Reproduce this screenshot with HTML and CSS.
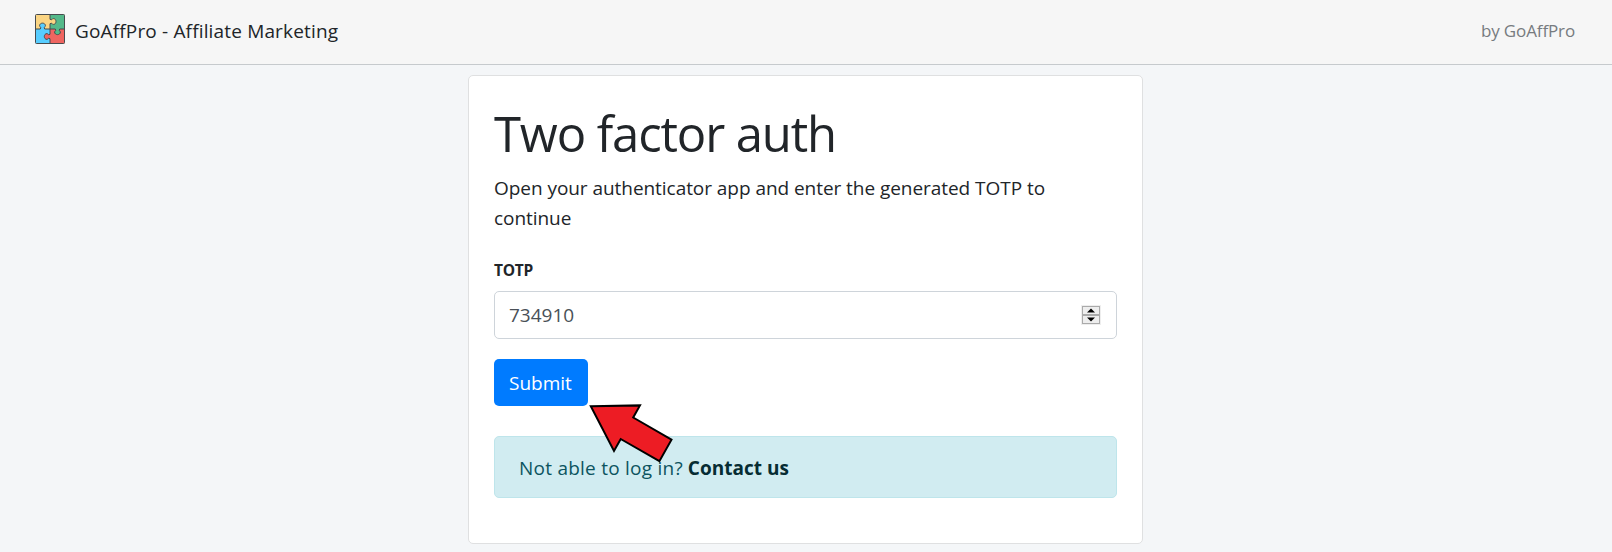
FILE: index.html
```html
<!DOCTYPE html>
<html lang="en">
<head>
<meta charset="utf-8">
<title>GoAffPro - Affiliate Marketing</title>
<link rel="stylesheet" href="styles.css">
</head>
<body>
<header class="navbar">
  <a class="brand">
    <svg class="logo" viewBox="0 0 30 30" width="30" height="30">
      <rect x=".5" y=".5" width="29" height="29" rx="1" fill="#fbd583"/>
      <path d="M15 .5H29.5V15H15z" fill="#54b98a"/>
      <path d="M.5 15H15V29.500H.5z" fill="#57cdff"/>
      <path d="M15 15H29.500V29.500H15z" fill="#ef6560"/>
      <g stroke="#474b4e" stroke-width="1">
        <path d="M15 .5V5.300C17.500 6.600 16.500 4.600 18.500 4.600C21.800 4.600 21.800 10.400 18.500 10.400C16.500 10.400 17.500 8.400 15 9.700V15" fill="#fbd583"/>
        <path d="M.5 15H5.300C6.600 12.500 4.600 13.500 4.600 11.700C4.600 8.300 10.400 8.300 10.400 11.700C10.400 13.500 8.400 12.500 9.700 15H15" fill="#57cdff"/>
        <path d="M15 15H20.300C21.600 17.500 19.600 16.500 19.600 18C19.600 21.500 25.400 21.500 25.400 18C25.400 16.500 23.400 17.500 24.700 15H29.500" fill="#54b98a"/>
        <path d="M15 15V20.300C12.500 21.600 13.500 19.600 12 19.600C8.400 19.600 8.400 25.400 12 25.400C13.500 25.400 12.500 23.400 15 24.700V29.500" fill="#ef6560"/>
        <rect x=".5" y=".5" width="29" height="29" rx="1" fill="none"/>
      </g>
    </svg>
    <span class="brand-name">GoAffPro - Affiliate Marketing</span>
  </a>
  <span class="byline">by GoAffPro</span>
</header>
<main class="card">
  <h1 class="title">Two factor auth</h1>
  <p class="lead">Open your authenticator app and enter the generated TOTP to <br>continue</p>
  <form class="form">
    <label class="label">TOTP</label>
    <div class="field">
      <span class="value">734910</span>
      <span class="spinner">
        <svg class="step" viewBox="0 0 16 7"><path d="M4 5.500L8 1.500L12 5.500z"/></svg>
        <svg class="step" viewBox="0 0 16 7"><path d="M4 1.500L8 5.500L12 1.500z"/></svg>
      </span>
    </div>
    <button class="submit" type="button"><span class="submit-text">Submit</span></button>
  </form>
  <div class="alert"><span class="question">Not able to log in?</span><a class="contact">Contact us</a></div>
</main>
<svg class="pointer" viewBox="0 0 90 64" width="90" height="64">
  <path d="M4.800 6.200L54 5.400L47.200 17.500L85.500 39.700L73.400 61.200L34.700 39L28 51z"/>
</svg>
</body>
</html>
```
FILE: styles.css
```css
* { box-sizing: border-box; }

body {
  margin: 0;
  height: 552px;
  overflow: hidden;
  background: #f4f6f8;
  color: #212529;
  font: 19px/30px "Open Sans", "Noto Sans", sans-serif;
  white-space: nowrap;
}

.navbar {
  height: 65px;
  padding: 0 37px 7px 35px;
  display: flex;
  align-items: center;
  justify-content: space-between;
  background: #f6f6f6;
  border-bottom: 1px solid #c6cacd;
}

.brand { display: flex; align-items: center; gap: 10px; }
.logo { display: block; }
.brand-name { padding-top: 4px; letter-spacing: 0.16px; }
.byline { padding-top: 4px; font-size: 17px; color: #777b7f; letter-spacing: -0.13px; }

.card {
  width: 675px;
  height: 469px;
  margin: 10px 0 0 468px;
  padding: 25px;
  background: #fff;
  border: 1px solid #dfe0e1;
  border-radius: 5px;
}

.title { margin: 2px 0 10px; font-size: 49px; font-weight: 400; line-height: 60px; letter-spacing: -1.120px; }
.lead { margin: 0 0 22px; letter-spacing: -0.050px; }
.label { display: block; height: 36px; font-size: 15.500px; font-weight: 700; letter-spacing: -0.3px; }

.field {
  height: 48px;
  padding: 0 16px 0 14px;
  display: flex;
  align-items: center;
  justify-content: space-between;
  border: 1px solid #ced4da;
  border-radius: 5px;
  color: #495057;
}

.spinner { display: flex; flex-direction: column; width: 18px; background: #aaa; padding: 1px; gap: 2px; outline: 1px solid #eee; }
.step { display: block; width: 16px; height: 7px; background: #eee; }

.submit {
  display: block;
  width: 94px;
  height: 47px;
  margin-top: 20px;
  padding: 0 0 0 15px;
  border: 0;
  border-radius: 5px;
  background: #007bff;
  color: #fff;
  font: inherit;
  text-align: left;
}

.alert {
  height: 62px;
  margin-top: 30px;
  padding: 1px 24px 0;
  display: flex;
  align-items: center;
  gap: 5px;
  border: 1px solid #bee5eb;
  border-radius: 5px;
  background: #d1ecf1;
  color: #0c5460;
}

.question { letter-spacing: 0.240px; }
.contact { color: #062c33; font-weight: 700; letter-spacing: 0; }

.pointer { position: absolute; left: 586px; top: 400px; fill: #ed1c24; stroke: #000; stroke-width: 2; }
```
